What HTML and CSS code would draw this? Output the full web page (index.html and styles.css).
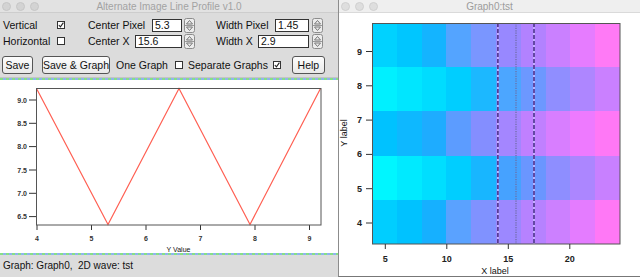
FILE: index.html
```html
<!DOCTYPE html>
<html lang="en">
<head>
  <meta charset="UTF-8" />
  <title>Alternate Image Line Profile v1.0</title>
  <link rel="stylesheet" href="styles.css">
</head>
<body>

<div class="desk">

  <div class="panel">
    <div class="titlebar">
      <div class="lights"><span></span><span></span><span></span></div>
      <div class="title">Alternate Image Line Profile v1.0</div>
      <div></div>
    </div>

    <div class="controls">
      <div class="inputs">
        <div class="dir">
          <div class="row"><span class="dirlbl">Vertical</span>
            <svg class="check" width="8" height="8" viewBox="0 0 8 8"><rect x="0.5" y="0.5" width="7" height="7" fill="#fff" stroke="#333"/><path d="M1.8 4 L3.4 5.8 L6.4 1.6" fill="none" stroke="#222" stroke-width="1.1"/></svg>
          </div>
          <div class="row"><span class="dirlbl">Horizontal</span>
            <svg class="check" width="8" height="8" viewBox="0 0 8 8"><rect x="0.5" y="0.5" width="7" height="7" fill="#fff" stroke="#333"/></svg>
          </div>
        </div>

        <div class="num">
          <div class="row"><span class="lbl">Center Pixel</span><span class="field w29">5.3</span>
            <svg class="stepper" width="11" height="15" viewBox="0 0 11 15"><rect x="0.5" y="0.5" width="10" height="14" rx="2" fill="#ececec" stroke="#8c8c8c"/><line x1="1" y1="7.5" x2="10" y2="7.5" stroke="#9a9a9a"/><path d="M2.5 6 L5.5 2.5 L8.5 6 Z" fill="none" stroke="#777"/><path d="M2.5 9 L5.5 12.5 L8.5 9 Z" fill="none" stroke="#777"/></svg>
          </div>
          <div class="row"><span class="lbl">Center X</span><span class="field w46">15.6</span>
            <svg class="stepper" width="11" height="15" viewBox="0 0 11 15"><rect x="0.5" y="0.5" width="10" height="14" rx="2" fill="#ececec" stroke="#8c8c8c"/><line x1="1" y1="7.5" x2="10" y2="7.5" stroke="#9a9a9a"/><path d="M2.5 6 L5.5 2.5 L8.5 6 Z" fill="none" stroke="#777"/><path d="M2.5 9 L5.5 12.5 L8.5 9 Z" fill="none" stroke="#777"/></svg>
          </div>
        </div>

        <div class="num wide">
          <div class="row"><span class="lbl">Width Pixel</span><span class="field w33">1.45</span>
            <svg class="stepper" width="11" height="15" viewBox="0 0 11 15"><rect x="0.5" y="0.5" width="10" height="14" rx="2" fill="#ececec" stroke="#8c8c8c"/><line x1="1" y1="7.5" x2="10" y2="7.5" stroke="#9a9a9a"/><path d="M2.5 6 L5.5 2.5 L8.5 6 Z" fill="none" stroke="#777"/><path d="M2.5 9 L5.5 12.5 L8.5 9 Z" fill="none" stroke="#777"/></svg>
          </div>
          <div class="row"><span class="lbl">Width X</span><span class="field w50">2.9</span>
            <svg class="stepper" width="11" height="15" viewBox="0 0 11 15"><rect x="0.5" y="0.5" width="10" height="14" rx="2" fill="#ececec" stroke="#8c8c8c"/><line x1="1" y1="7.5" x2="10" y2="7.5" stroke="#9a9a9a"/><path d="M2.5 6 L5.5 2.5 L8.5 6 Z" fill="none" stroke="#777"/><path d="M2.5 9 L5.5 12.5 L8.5 9 Z" fill="none" stroke="#777"/></svg>
          </div>
        </div>
      </div>

      <div class="actions">
        <button class="btn save">Save</button>
        <button class="btn graph">Save &amp; Graph</button>
        <span class="opt one">One Graph</span>
        <svg class="check" width="8" height="8" viewBox="0 0 8 8"><rect x="0.5" y="0.5" width="7" height="7" fill="#fff" stroke="#333"/></svg>
        <span class="opt sep-graphs">Separate Graphs</span>
        <svg class="check" width="8" height="8" viewBox="0 0 8 8"><rect x="0.5" y="0.5" width="7" height="7" fill="#fff" stroke="#333"/><path d="M1.8 4 L3.4 5.8 L6.4 1.6" fill="none" stroke="#222" stroke-width="1.1"/></svg>
        <button class="btn help">Help</button>
      </div>
    </div>

    <div class="sep"></div>

    <div class="profile">
      <svg width="338" height="173" viewBox="0 0 338 173">
        <g class="tick">
          <line x1="29" y1="20" x2="36" y2="20"/>
          <line x1="29" y1="43.3" x2="36" y2="43.3"/>
          <line x1="29" y1="66.6" x2="36" y2="66.6"/>
          <line x1="29" y1="90" x2="36" y2="90"/>
          <line x1="29" y1="113.3" x2="36" y2="113.3"/>
          <line x1="29" y1="136.6" x2="36" y2="136.6"/>
          <line x1="37" y1="145" x2="37" y2="150"/>
          <line x1="91.5" y1="145" x2="91.5" y2="150"/>
          <line x1="146" y1="145" x2="146" y2="150"/>
          <line x1="200.5" y1="145" x2="200.5" y2="150"/>
          <line x1="255" y1="145" x2="255" y2="150"/>
          <line x1="309.5" y1="145" x2="309.5" y2="150"/>
        </g>
        <g class="small" text-anchor="end">
          <text x="27" y="22.5">9.0</text>
          <text x="27" y="45.8">8.5</text>
          <text x="27" y="69.1">8.0</text>
          <text x="27" y="92.5">7.5</text>
          <text x="27" y="115.8">7.0</text>
          <text x="27" y="139.1">6.5</text>
        </g>
        <g class="small" text-anchor="middle">
          <text x="37" y="160.5">4</text>
          <text x="91.5" y="160.5">5</text>
          <text x="146" y="160.5">6</text>
          <text x="200.5" y="160.5">7</text>
          <text x="255" y="160.5">8</text>
          <text x="309.5" y="160.5">9</text>
          <text class="axis-name" x="178.5" y="172">Y Value</text>
        </g>
        <polyline class="trace" points="36.5,8.5 108,144.5 179,8.5 250,144.5 320.5,8.5"/>
        <rect class="frame" x="36.5" y="8.5" width="284.5" height="136.5"/>
      </svg>
    </div>

    <div class="sep"></div>

    <div class="status">Graph: Graph0,&nbsp; 2D wave: tst</div>
  </div>

  <div class="graphwin">
    <div class="titlebar light">
      <div class="lights"><span></span><span></span><span></span></div>
      <div class="title">Graph0:tst</div>
      <div></div>
    </div>
    <svg width="301" height="263" viewBox="0 0 301 263">
      <g id="heat" shape-rendering="crispEdges"></g>
      <g class="marker">
        <line class="under" x1="158.9" y1="10" x2="158.9" y2="231"/>
        <line class="dash" x1="158.9" y1="10" x2="158.9" y2="231"/>
        <line class="under" x1="195" y1="10" x2="195" y2="231"/>
        <line class="dash" x1="195" y1="10" x2="195" y2="231"/>
        <line class="dot" x1="177" y1="10" x2="177" y2="231"/>
      </g>
      <rect class="frame" x="33.5" y="10.5" width="247.5" height="220.5"/>
      <g class="tick">
        <line x1="27" y1="38.5" x2="33" y2="38.5"/>
        <line x1="27" y1="72.8" x2="33" y2="72.8"/>
        <line x1="27" y1="107.1" x2="33" y2="107.1"/>
        <line x1="27" y1="141.4" x2="33" y2="141.4"/>
        <line x1="27" y1="175.7" x2="33" y2="175.7"/>
        <line x1="27" y1="210" x2="33" y2="210"/>
        <line x1="46.3" y1="231" x2="46.3" y2="236"/>
        <line x1="107.8" y1="231" x2="107.8" y2="236"/>
        <line x1="169.3" y1="231" x2="169.3" y2="236"/>
        <line x1="230.8" y1="231" x2="230.8" y2="236"/>
      </g>
      <g class="big" text-anchor="end">
        <text x="23" y="41.5">9</text>
        <text x="23" y="75.8">8</text>
        <text x="23" y="110.1">7</text>
        <text x="23" y="144.4">6</text>
        <text x="23" y="178.7">5</text>
        <text x="23" y="213">4</text>
      </g>
      <g class="big" text-anchor="middle">
        <text x="46.3" y="249">5</text>
        <text x="107.8" y="249">10</text>
        <text x="169.3" y="249">15</text>
        <text x="230.8" y="249">20</text>
        <text class="axis-name" x="156" y="261">X label</text>
        <text class="axis-name" transform="translate(8 120) rotate(-90)">Y label</text>
      </g>
    </svg>
  </div>

</div>

<script>
  const colours = [
    ["#00d2ff", "#00c6ff", "#14b4ff", "#54a4ff", "#7a96ff", "#9888ff", "#b282ff", "#ca80ff", "#e67cff", "#ff7af6"],
    ["#00f0ff", "#00e6ff", "#00dcff", "#00ceff", "#1cb8ff", "#4ca6ff", "#6c98ff", "#908eff", "#ae86ff", "#ca80ff"],
    ["#00c2ff", "#0eb8ff", "#1eacff", "#5c9cff", "#848eff", "#a486ff", "#c080ff", "#d87eff", "#ee7aff", "#ff78f6"],
    ["#00f6ff", "#00eaff", "#00deff", "#00ceff", "#18b6ff", "#46a2ff", "#6a96ff", "#8e8eff", "#ac86ff", "#c880ff"],
    ["#00ceff", "#00c2ff", "#16b0ff", "#5aa2ff", "#8092ff", "#9c88ff", "#b682ff", "#cc80ff", "#e47cff", "#ff78f6"]
  ];
  const heat = document.getElementById("heat");
  const ns = "http://www.w3.org/2000/svg";
  colours.forEach((row, r) => {
    row.forEach((fill, c) => {
      const cell = document.createElementNS(ns, "rect");
      cell.setAttribute("x", 33 + c * 24.8);
      cell.setAttribute("y", 10 + r * 44.2);
      cell.setAttribute("width", 25);
      cell.setAttribute("height", 44.4);
      cell.setAttribute("fill", fill);
      heat.appendChild(cell);
    });
  });
</script>

</body>
</html>
```

FILE: styles.css
```css
* { box-sizing: border-box; }
body { margin: 0;
    font-family: "Liberation Sans", Arial, sans-serif;
    background: #fff; }
.desk { display: flex; width: 640px; height: 277px; overflow: hidden; }

.titlebar {
  height: 13px;
  display: grid;
  grid-template-columns: 1fr auto 1fr;
  align-items: center;
  background: #e2e2e2;
  border-bottom: 1px solid #cdcdcd;
  font-size: 10px;
  color: #a2a2a2;
}
.titlebar.light { background: #efefef; border-bottom-color: #dadada; color: #9c9c9c; }
.lights { display: flex; gap: 5px; padding-left: 2px; }
.lights span { width: 9px; height: 9px; border-radius: 50%; background: #d3d3d3; border: 1px solid #c6c6c6; }
.titlebar.light .lights span { background: #dedede; border-color: #d0d0d0; }

.panel { width: 338px; flex: none; display: flex; flex-direction: column; background: #dcdcdc; }
.controls { height: 65px; padding: 4px 0 0 3px; border-bottom: 1px solid #c4c4c4; font-size: 10.5px; color: #111; }
.inputs { display: flex; }
.row { height: 16px; display: flex; align-items: center; }
.dir { width: 85px; }
.dirlbl { width: 54px; }
.num { width: 107px; }
.num.wide { margin-left: 21px; width: 107px; }
.lbl { flex: 1; }
.field {
  height: 13px;
  background: #fff;
  border: 1px solid #333;
  padding-left: 2px;
  line-height: 11px;
}
.w29 { width: 30px; }
.w46 { width: 47px; }
.w33 { width: 34px; }
.w50 { width: 51px; }
.stepper { margin-left: 2px; }
.wide .stepper { margin-left: 3px; }

.actions { display: flex; align-items: center; margin-top: 7px; }
.btn {
  height: 18px;
  padding: 0;
  font: 10.5px "Liberation Sans", Arial, sans-serif;
  color: #111;
  background: linear-gradient(#fdfdfd, #e9e9e9);
  border: 1px solid #555;
  border-radius: 3px;
}
.save { width: 31px; margin-left: -1px; }
.graph { width: 68px; margin-left: 9px; }
.one { margin-left: 6px; margin-right: 7px; }
.sep-graphs { margin-left: 5px; margin-right: 5px; }
.help { width: 33px; margin-left: 11px; }

.sep { height: 2px; background: repeating-linear-gradient(90deg, #86e086 0 3px, #8fb4ee 3px 6px); }
.profile { height: 173px; background: #fff; }
.profile svg, .graphwin svg { display: block; }
.status { height: 22px; padding: 3px 0 0 3px; font-size: 10px; line-height: 16px; color: #111; background: #dcdcdc; }

.tick line { stroke: #333; stroke-width: 1; }
.small { font-size: 7px; font-weight: bold; fill: #333; }
.big { font-size: 9px; font-weight: bold; fill: #222; }
.axis-name { font-weight: normal; fill: #111; }
.trace { fill: none; stroke: #ff5f52; stroke-width: 1.2; }
.frame { fill: none; stroke: #555; stroke-width: 1; }

.graphwin { flex: 1; border-left: 1px solid #8c8c8c; border-bottom: 1px solid #777; background: #fff; }
.marker .under { stroke: #c9b9ff; stroke-width: 1.6; }
.marker .dash { stroke: #4b2f8c; stroke-width: 1.6; stroke-dasharray: 4 2; }
.marker .dot { stroke: #6d6aa0; stroke-width: 1.2; stroke-dasharray: 1.2 1.2; }
```
